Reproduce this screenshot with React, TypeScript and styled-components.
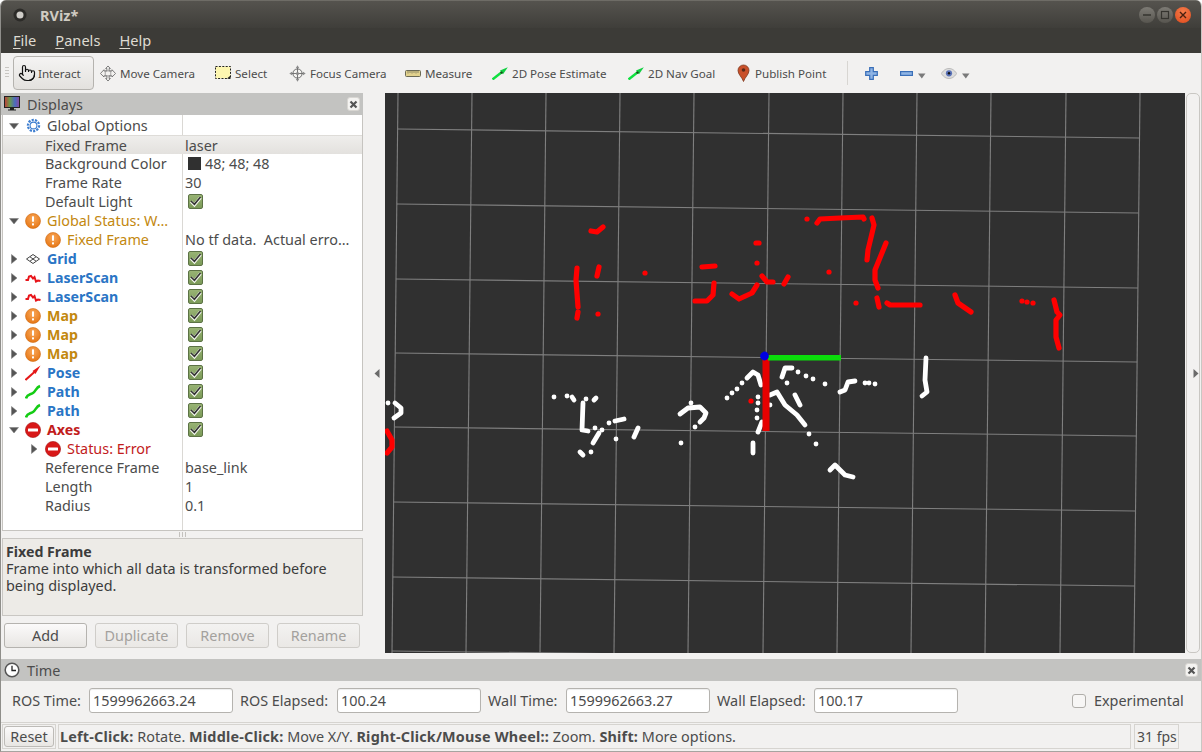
import React, { useId } from 'react';
import styled, { createGlobalStyle } from 'styled-components';
import { Pointer } from 'lucide-react';

const Global = createGlobalStyle`
  html, body { margin: 0; padding: 0; background: #fff; }
  body { font-family: "Noto Sans", "Open Sans", sans-serif; font-size: 14.4px; color: #4c4c4c; }
`;

const Win = styled.div`
  width: 1202px; height: 752px; box-sizing: border-box; display: flex; flex-direction: column;
  background: #f2f1f0; border-radius: 6px 6px 0 0; overflow: hidden;
  border-left: 1px solid #8f8e8a; border-right: 1px solid #c9c7c3; border-bottom: 1px solid #a6a4a0;
`;
const TitleBar = styled.div`
  height: 28px; flex: none; display: flex; align-items: center; position: relative;
  background: linear-gradient(#55534e, #3f3e3a); border-top: 1px solid #6e6c66; box-sizing: border-box;
  padding-left: 12px;
`;
const TitleText = styled.span`
  font-weight: 700; font-size: 14.5px; color: #cfcbc2; margin-left: 13px;
`;
const WinButtons = styled.div`
  margin-left: auto; margin-right: 10px; display: flex; gap: 2px; align-items: center;
`;
const WinBtn = styled.div<{ $close?: boolean }>`
  width: 16px; height: 16px; border-radius: 50%; display: flex; align-items: center; justify-content: center;
  background: ${p => p.$close ? 'radial-gradient(circle at 50% 30%, #f57c4b, #de4a1c)' : 'linear-gradient(#7d7b75, #57554f)'};
`;
const MenuBar = styled.div`
  height: 25px; flex: none; box-sizing: border-box; background: #3c3b37; display: flex; align-items: center; padding: 0 0 1px 12px; gap: 19px;
`;
const MenuItem = styled.span`
  color: #dfdbd2; font-size: 14.6px;
  u { text-underline-offset: 2px; }
`;
const Toolbar = styled.div`
  height: 40px; flex: none; display: flex; align-items: center; background: #f2f1f0; padding-left: 4px; box-sizing: border-box;
`;
const Grip = styled.div`
  width: 4px; height: 12px; margin-right: 4px;
  background: repeating-linear-gradient(#c8c6c2 0 1px, transparent 1px 3px);
`;
const Tool = styled.div<{ $w: number; $active?: boolean }>`
  width: ${p => p.$w}px; height: 34px; flex: none; display: flex; align-items: center; gap: ${p => p.$active ? 2 : 4}px; box-sizing: border-box;
  font-size: 11.6px; color: #4c4c4c; white-space: nowrap;
  ${p => p.$active ? `
    border: 1px solid #b5b3af; border-radius: 4px; background: linear-gradient(#f5f4f3, #e3e1de);
    padding-left: 4px; margin-right: 6px;
  ` : ''}
`;
const ToolSep = styled.div`
  width: 1px; height: 24px; background: #d8d6d2; margin-right: 17px;
`;
const IconTool = styled.div<{ $w: number }>`
  width: ${p => p.$w}px; flex: none; display: flex; align-items: center; gap: 5px;
`;
const CaretBox = styled.div`
  margin-top: 6px; display: flex;
`;
const Content = styled.div`
  height: 566px; flex: none; display: flex;
`;
const LeftDock = styled.div`
  width: 362px; flex: none; display: flex; flex-direction: column; box-sizing: border-box;
`;
const DockHeader = styled.div`
  height: 22px; flex: none; background: #c3c3c1; display: flex; align-items: center; padding: 0 3px 0 3px; gap: 7px;
  color: #4c4c4c; font-size: 14.4px;
`;
const CloseChip = styled.div`
  margin-left: auto; width: 13px; height: 14px; border-radius: 3px; background: #f4f3f1; border: 1px solid #d8d6d2;
  display: flex; align-items: center; justify-content: center; box-sizing: border-box;
`;
const Tree = styled.div`
  height: 416px; flex: none; background: #fff; margin-left: 1px; border: 1px solid #c6c4c0; border-top: none;
  box-sizing: border-box; position: relative; padding-top: 1px;
`;
const ColumnRule = styled.div`
  position: absolute; left: 179px; top: 0; bottom: 0; width: 1px; background: #dad8d4;
`;
const Row = styled.div<{ $sel?: boolean }>`
  height: 19px; display: flex; align-items: center; position: relative; font-size: 14.4px; white-space: pre;
  ${p => p.$sel ? `background: linear-gradient(#efeeec, #e3e1de); border-top: 1px solid #dedcd8; box-sizing: border-box;` : ''}
`;
const NameCell = styled.div<{ $depth: number }>`
  width: 180px; flex: none; box-sizing: border-box; padding-left: ${p => 2 + p.$depth * 20}px; display: flex; align-items: center;
`;
const ArrowSlot = styled.div`
  width: 20px; flex: none; display: flex; justify-content: center; padding-right: 2px; box-sizing: border-box;
`;
const RowIcon = styled.div`
  width: 16px; height: 16px; flex: none; margin-right: 6px; display: flex; align-items: center; justify-content: center;
`;
const Label = styled.span<{ $tone?: string; $bold?: boolean }>`
  color: ${p => p.$tone === 'blue' ? '#2a75c5' : p.$tone === 'orange' ? '#c3880f' : p.$tone === 'red' ? '#c21c1c' : '#4c4c4c'};
  font-weight: ${p => p.$bold ? 700 : 400};
  font-size: ${p => p.$bold ? '14.2px' : 'inherit'};
`;
const ValueCell = styled.div`
  padding-left: 2px; display: flex; align-items: center; gap: 4px; color: #4c4c4c;
`;
const Swatch = styled.div`
  width: 13px; height: 13px; background: #303030; margin-left: 3px;
`;
const Check = styled.div`
  width: 15px; height: 15px; margin-left: 3px; border-radius: 2px; box-sizing: border-box; display: flex; align-items: center; justify-content: center;
  background: linear-gradient(#98b374, #7b9a58); border: 1px solid #5c7245;
`;
const SplitGrip = styled.div`
  height: 7px; flex: none; display: flex; justify-content: center; align-items: center;
  &::after { content: ''; width: 7px; height: 5px; background: repeating-linear-gradient(90deg, #c4c2be 0 1px, transparent 1px 3px); }
`;
const Description = styled.div`
  height: 78px; flex: none; margin-left: 1px; background: #edebe7; border: 1px solid #c9c7c3; box-sizing: border-box;
  padding: 4px 3px; font-size: 14.4px; line-height: 17px; color: #3c3c3c;
  b { display: block; font-weight: 700; font-size: 14.2px; }
`;
const ButtonRow = styled.div`
  display: flex; gap: 8px; padding: 7px 0 0 3px;
`;
const Btn = styled.div<{ $off?: boolean }>`
  width: 83px; height: 25px; box-sizing: border-box; border-radius: 3px; display: flex; align-items: center; justify-content: center;
  font-size: 14.4px; color: ${p => p.$off ? '#a3a19d' : '#4c4c4c'};
  border: 1px solid ${p => p.$off ? '#cfcdc9' : '#b5b3af'};
  background: linear-gradient(${p => p.$off ? '#f3f2f1, #eae8e5' : '#fbfafa, #e8e6e3'});
`;
const Handle = styled.div<{ $w: number }>`
  width: ${p => p.$w}px; flex: none; height: 560px; display: flex; align-items: center; justify-content: center; box-sizing: border-box;
  padding-left: 6px;
`;
const RightHandle = styled(Handle)`
  margin-left: 1px; border: 1px solid #c9c7c3; border-radius: 5px; width: 14px; padding-left: 5px;
`;
const Viewport = styled.svg`
  width: 800px; height: 560px; flex: none; display: block; background: #303030;
`;
const TimeDock = styled.div`
  height: 63px; flex: none; display: flex; flex-direction: column;
`;
const TimeRow = styled.div`
  flex: 1; display: grid; align-items: center; padding: 0 0 2px 11px; box-sizing: border-box;
  grid-template-columns: 77px 144px 7px 90px 7px 144px 7px 71px 7px 144px 7px 90px 7px 144px 114px 22px 1fr;
  font-size: 14.4px; color: #4c4c4c; white-space: nowrap; height: 41px;
`;
const TimeInput = styled.div`
  height: 25px; box-sizing: border-box; border: 1px solid #b5b3af; border-radius: 3px; background: #fff; padding-left: 3px;
  display: flex; align-items: center; box-shadow: inset 0 1px 1px #eee;
`;
const Checkbox = styled.div`
  width: 14px; height: 14px; box-sizing: border-box; border: 1px solid #b0aeaa; border-radius: 3px; background: #f7f6f5;
`;
const StatusBar = styled.div`
  height: 28px; flex: none; display: flex; align-items: center; border-top: 1px solid #d6d4d0; box-sizing: border-box; padding-left: 1px; font-size: 14.4px;
`;
const ResetFrame = styled.div`
  width: 54px; height: 25px; flex: none; box-sizing: border-box; border: 1px solid #d6d4d0; padding: 1px; display: flex;
`;
const ResetBtn = styled.div`
  flex: 1; border: 1px solid #bdbbb7; border-radius: 3px; display: flex; align-items: center; justify-content: center;
  background: linear-gradient(#fbfafa, #e8e6e3); font-size: 14.4px;
`;
const Message = styled.div`
  width: 1073px; height: 25px; margin-left: 2px; flex: none; border: 1px solid #d6d4d0; box-sizing: border-box; padding-left: 1px; display: flex; align-items: center; white-space: pre;
  b { font-weight: 700; letter-spacing: .2px; }
`;
const Fps = styled.div`
  width: 45px; height: 25px; margin-left: 3px; flex: none; border: 1px solid #d6d4d0; box-sizing: border-box; padding-left: 2px; display: flex; align-items: center; font-size: 14px;
`;

/* ---------- icons ---------- */
const Tri = ({ dir }: { dir: 'down' | 'right' }) => (
  <svg width="10" height="10" viewBox="0 0 10 10">
    <path d={dir === 'down' ? 'M0.5 2.5h9L5 8z' : 'M2.5 0.5v9L8 5z'} fill="#555" stroke="#777" strokeWidth=".5" />
  </svg>
);
const Warn = () => {
  const id = useId();
  return (
    <svg width="16" height="16" viewBox="0 0 16 16">
      <defs><radialGradient id={id} cx=".5" cy=".35" r=".7"><stop offset="0" stopColor="#f9a85a" /><stop offset="1" stopColor="#e4720f" /></radialGradient></defs>
      <circle cx="8" cy="8" r="7.5" fill={`url(#${id})`} stroke="#d06a10" strokeWidth=".6" />
      <rect x="7" y="3.2" width="2" height="5.6" rx=".6" fill="#fff" />
      <rect x="7" y="10.2" width="2" height="2.2" rx=".6" fill="#fff" />
    </svg>
  );
};
const Err = () => (
  <svg width="16" height="16" viewBox="0 0 16 16">
    <circle cx="8" cy="8" r="7.6" fill="#d81818" stroke="#a81010" strokeWidth=".6" />
    <rect x="3" y="6.5" width="10" height="3" rx=".5" fill="#fff" />
  </svg>
);
const Gear = () => (
  <svg width="15" height="15" viewBox="0 0 15 15">
    <circle cx="7.5" cy="7.5" r="5.6" fill="none" stroke="#3f7fd0" strokeWidth="2.2" strokeDasharray="2.2 1.2" />
    <circle cx="7.5" cy="7.5" r="3.4" fill="#fff" stroke="#3f7fd0" strokeWidth="1.1" />
  </svg>
);
const GridIcon = () => (
  <svg width="16" height="12" viewBox="0 0 16 12">
    <path d="M8 1.5L14.5 6L8 10.5L1.5 6zM5 3.8L11 8.2M11 3.8L5 8.2" fill="none" stroke="#444" strokeWidth="1" />
  </svg>
);
const Laser = () => (
  <svg width="16" height="12" viewBox="0 0 16 12">
    <path d="M0.5 8L3 8L4 4.5L6 4L8 6.5L9.5 5L11 9.5L13 8.5L15.5 9" fill="none" stroke="#e8141a" strokeWidth="2" />
  </svg>
);
const PoseI = () => (
  <svg width="16" height="16" viewBox="0 0 16 16">
    <path d="M0.5 15L10 6.5" stroke="#e41818" strokeWidth="2" />
    <path d="M15.5 0.5L7.5 6L10.5 9z" fill="#e41818" />
  </svg>
);
const PathI = () => (
  <svg width="16" height="16" viewBox="0 0 16 16">
    <path d="M1 14.5C2 10 5 11 8 9C11 7 11 3.5 15 2" fill="none" stroke="#14cc14" strokeWidth="2.6" />
  </svg>
);
const Monitor = () => {
  const id = useId();
  return (
    <svg width="16" height="16" viewBox="0 0 16 16">
      <defs><linearGradient id={id} x1="0" x2="1"><stop offset="0" stopColor="#c43a3a" /><stop offset=".35" stopColor="#6a9a4a" /><stop offset=".7" stopColor="#4a6ac0" /><stop offset="1" stopColor="#8a4a9a" /></linearGradient></defs>
      <rect x=".5" y=".5" width="15" height="11" fill={`url(#${id})`} stroke="#222" />
      <path d="M6 12h4v1.5h2v1H4v-1h2z" fill="#222" />
    </svg>
  );
};
const Clock = () => (
  <svg width="16" height="16" viewBox="0 0 16 16">
    <circle cx="8" cy="8" r="6.8" fill="#fff" stroke="#555" strokeWidth="1.5" />
    <path d="M8 3.8V8.5H12" fill="none" stroke="#222" strokeWidth="1.3" />
  </svg>
);
const XMark = () => (
  <svg width="9" height="9" viewBox="0 0 9 9"><path d="M1.5 1.5L7.5 7.5M7.5 1.5L1.5 7.5" stroke="#555" strokeWidth="2.2" /></svg>
);
const Tick = () => (
  <svg width="13" height="13" viewBox="0 0 13 13">
    <path d="M2 6.5L5.4 10L11.5 2.5" fill="none" stroke="#f3f6ee" strokeWidth="3" />
    <path d="M2 6L5.4 9.3L11.5 2" fill="none" stroke="#333" strokeWidth="1.6" />
  </svg>
);
const MoveCam = () => (
  <svg width="16" height="17" viewBox="0 0 17 17" style={{ flex: 'none' }}>
    <path d="M8.5 .5L11 3.2H9.7V5.8H12.8V4.5L16.5 8.5L12.8 12.2V11H9.7V13.8H11L8.5 16.5L6 13.8H7.3V11H4.2V12.2L.5 8.5L4.2 4.5V5.8H7.3V3.2H6z" fill="#f3f2f0" stroke="#6a6a6a" strokeWidth=".9" />
    <rect x="5.5" y="5.8" width="6" height="5.2" fill="none" stroke="#8a8a8a" strokeWidth=".8" />
  </svg>
);
const SelectI = () => (
  <svg width="16" height="14" viewBox="0 0 16 14" style={{ flex: 'none' }}>
    <rect x=".5" y=".5" width="15" height="12" fill="#fdf6b0" stroke="#222" strokeDasharray="2 1.4" />
    <path d="M12 12.5H15.5V9.5z" fill="#222" />
  </svg>
);
const FocusI = () => (
  <svg width="17" height="17" viewBox="0 0 17 17" style={{ flex: 'none' }}>
    <circle cx="8.5" cy="8.5" r="4.6" fill="#f3f2f0" stroke="#6a6a6a" />
    <path d="M8.5 1V16M1 8.5H16" stroke="#6a6a6a" strokeWidth=".9" />
    <path d="M8.5 .3L6.8 3H10.2zM8.5 16.7L6.8 14H10.2zM.3 8.5L3 6.8V10.2zM16.7 8.5L14 6.8V10.2z" fill="#8a8a8a" />
    <circle cx="8.5" cy="8.5" r="1.6" fill="#888" />
  </svg>
);
const Ruler = () => (
  <svg width="16" height="7" viewBox="0 0 16 7" style={{ flex: 'none' }}>
    <rect x=".5" y=".5" width="15" height="6" rx="1" fill="#e2d28e" stroke="#6b6a55" />
    <path d="M3 1V3.5M5 1V3M7 1V3.5M9 1V3M11 1V3.5M13 1V3" stroke="#6b6a55" strokeWidth=".7" />
  </svg>
);
const Arrow2D = () => (
  <svg width="16" height="13" viewBox="0 0 16 13" style={{ flex: 'none' }}>
    <path d="M0.5 12.5L10 5" stroke="#10e040" strokeWidth="2.4" />
    <path d="M15.8 0.3L8 3.6L11 7.2z" fill="#10d040" />
    <circle cx="9.5" cy="5.6" r="1.2" fill="#1a4a1a" />
  </svg>
);
const Pin = () => (
  <svg width="15" height="18" viewBox="0 0 14 18" style={{ flex: 'none' }}>
    <path d="M7 17.5C5.5 13 1.5 10.5 1.5 6.5a5.5 5.5 0 0 1 11 0C12.5 10.5 8.5 13 7 17.5z" fill="#c9502a" stroke="#7d3a20" strokeWidth=".8" />
    <circle cx="7" cy="6" r="1.8" fill="#5a2a18" />
  </svg>
);
const PlusI = () => (
  <svg width="13" height="13" viewBox="0 0 13 13">
    <path d="M4.7 .7H8.3V4.7H12.3V8.3H8.3V12.3H4.7V8.3H.7V4.7H4.7z" fill="#8fb4e4" stroke="#3a6fb8" strokeWidth="1.2" />
  </svg>
);
const MinusI = () => (
  <svg width="13" height="5" viewBox="0 0 13 5">
    <rect x=".6" y=".6" width="11.8" height="3.8" fill="#8fb4e4" stroke="#3a6fb8" strokeWidth="1.2" />
  </svg>
);
const EyeI = () => (
  <svg width="16" height="11" viewBox="0 0 16 11">
    <path d="M.3 5.5C3 1.5 5.5 .5 8 .5s5 1 7.7 5C13 9.5 10.5 10.5 8 10.5S3 9.5.3 5.5z" fill="#dcdcdc" stroke="#a8a8a8" strokeWidth=".7" />
    <circle cx="8" cy="5.3" r="3.1" fill="#5a72b8" />
    <circle cx="8" cy="5.3" r="1.2" fill="#111" />
  </svg>
);
const Caret = () => (
  <CaretBox><svg width="8" height="6" viewBox="0 0 8 6"><path d="M0 .5H7.5L3.8 5.5z" fill="#7a7a7a" /></svg></CaretBox>
);
const HandleArrow = ({ dir }: { dir: 'l' | 'r' }) => (
  <svg width="6" height="9" viewBox="0 0 6 9"><path d={dir === 'l' ? 'M5.5 0V9L.5 4.5z' : 'M.5 0V9L5.5 4.5z'} fill="#6a6a6a" /></svg>
);

/* ---------- tree data ---------- */
type RowT = {
  depth: number; arrow?: 'down' | 'right'; icon?: React.ReactNode; label: string;
  tone?: string; bold?: boolean; value?: string; check?: boolean; swatch?: boolean; sel?: boolean;
};
const rows: RowT[] = [
  { depth: 0, arrow: 'down', icon: <Gear />, label: 'Global Options' },
  { depth: 1, label: 'Fixed Frame', value: 'laser', sel: true },
  { depth: 1, label: 'Background Color', value: '48; 48; 48', swatch: true },
  { depth: 1, label: 'Frame Rate', value: '30' },
  { depth: 1, label: 'Default Light', check: true },
  { depth: 0, arrow: 'down', icon: <Warn />, label: 'Global Status: W…', tone: 'orange' },
  { depth: 1, icon: <Warn />, label: 'Fixed Frame', tone: 'orange', value: 'No tf data.  Actual erro…' },
  { depth: 0, arrow: 'right', icon: <GridIcon />, label: 'Grid', tone: 'blue', bold: true, check: true },
  { depth: 0, arrow: 'right', icon: <Laser />, label: 'LaserScan', tone: 'blue', bold: true, check: true },
  { depth: 0, arrow: 'right', icon: <Laser />, label: 'LaserScan', tone: 'blue', bold: true, check: true },
  { depth: 0, arrow: 'right', icon: <Warn />, label: 'Map', tone: 'orange', bold: true, check: true },
  { depth: 0, arrow: 'right', icon: <Warn />, label: 'Map', tone: 'orange', bold: true, check: true },
  { depth: 0, arrow: 'right', icon: <Warn />, label: 'Map', tone: 'orange', bold: true, check: true },
  { depth: 0, arrow: 'right', icon: <PoseI />, label: 'Pose', tone: 'blue', bold: true, check: true },
  { depth: 0, arrow: 'right', icon: <PathI />, label: 'Path', tone: 'blue', bold: true, check: true },
  { depth: 0, arrow: 'right', icon: <PathI />, label: 'Path', tone: 'blue', bold: true, check: true },
  { depth: 0, arrow: 'down', icon: <Err />, label: 'Axes', tone: 'red', bold: true, check: true },
  { depth: 1, arrow: 'right', icon: <Err />, label: 'Status: Error', tone: 'red' },
  { depth: 1, label: 'Reference Frame', value: 'base_link' },
  { depth: 1, label: 'Length', value: '1' },
  { depth: 1, label: 'Radius', value: '0.1' },
];

/* ---------- viewport drawing data (absolute screenshot coordinates) ---------- */
const vTop = [398, 472, 546, 620, 694, 769, 843, 917, 991, 1066, 1140];
const hLeft = [129, 204, 279, 353, 427, 502, 577, 651];
const redScan: number[][][] = [
  [[591,231],[597,232],[603,227]], [[577,268],[576,280],[578,307]], [[578,312],[577,318]], [[599,267],[597,276]],
  [[598,314]], [[645,273]], [[702,267],[715,266]], [[714,283],[713,295],[707,301],[695,301]],
  [[732,294],[739,299],[752,293],[757,285]], [[756,243],[759,243]], [[757,263]], [[762,276],[767,282],[773,282]],
  [[788,277],[784,284]], [[829,272]], [[807,219]], [[817,223],[820,219],[840,218],[863,217],[864,219]],
  [[872,218],[874,225],[868,250],[867,260]], [[886,243],[875,270],[875,280],[878,288]], [[877,298],[879,307]],
  [[856,303]], [[887,303],[890,305],[920,305]], [[955,295],[958,303],[971,312]], [[1022,301]], [[1027,302]], [[1033,303]],
  [[1054,300],[1057,312],[1060,315],[1056,320],[1056,337],[1059,348]], [[387,431],[392,440],[392,447],[387,453]],
  [[751,401]],
];
const whiteScan: number[][][] = [
  [[926,358],[925,380],[927,392],[922,396]], [[554,397]], [[567,396]], [[572,397],[574,400]], [[583,403],[582,430],[588,431]],
  [[586,399]], [[594,400],[596,398]], [[595,428]], [[602,430]], [[599,433],[593,443]], [[580,452],[583,455]], [[591,452]],
  [[609,423]], [[615,421],[624,419]], [[616,439]], [[638,428],[634,437]],
  [[680,414],[688,408],[700,407],[706,413],[704,418],[700,422]], [[691,403]], [[695,427]], [[681,443]],
  [[727,398]], [[732,393]], [[737,389]], [[742,383]], [[747,378],[753,372],[758,375],[761,385]],
  [[758,397]], [[758,403]], [[757,410]], [[757,418]], [[762,422],[758,432]], [[753,443],[753,453]],
  [[770,395],[777,392],[785,405],[797,415],[805,425]], [[770,405]], [[795,395],[800,405]],
  [[782,377],[785,368],[792,368]], [[787,383]], [[798,372]], [[806,376]], [[813,379]], [[825,384]], [[809,434]], [[816,444]],
  [[830,470],[835,465],[845,475],[853,477]], [[840,392],[845,390],[848,382],[855,381]], [[865,383]], [[869,383]], [[875,384]],
  [[388,403]], [[395,403],[401,408],[401,413],[394,418]],
];
const toD = (pts: number[][]) =>
  pts.length === 1 ? `M${pts[0][0]} ${pts[0][1]}h.01` : 'M' + pts.map(p => p.join(' ')).join('L');

const Scene = () => (
  <Viewport viewBox="385 93 800 560">
    <g stroke="#7f7f7f" strokeWidth="1.1">
      {vTop.map(x => <line key={x} x1={x} y1={93} x2={x - 6} y2={653} />)}
      {hLeft.map(y => {
        const xl = 398 - ((y - 93) * 6) / 560;
        const xr = 1140 - ((y - 93) * 6) / 560;
        return <line key={y} x1={xl} y1={y} x2={xr} y2={y + 9} />;
      })}
    </g>
    <g fill="none" stroke="#ff0000" strokeWidth="5.2" strokeLinejoin="round" strokeLinecap="round">
      {redScan.map((p, i) => <path key={i} d={toD(p)} />)}
    </g>
    <g fill="none" stroke="#ffffff" strokeWidth="4.8" strokeLinejoin="round" strokeLinecap="round">
      {whiteScan.map((p, i) => <path key={i} d={toD(p)} />)}
    </g>
    <rect x="762.5" y="358" width="7" height="73" fill="#e60000" />
    <rect x="768" y="355" width="73" height="5.5" fill="#0bdc0b" />
    <circle cx="764.5" cy="356" r="4.4" fill="#0000e0" />
  </Viewport>
);

export default function App() {
  return (
    <>
      <Global />
      <Win>
        <TitleBar>
          <svg width="14" height="14" viewBox="0 0 14 14">
            <circle cx="7" cy="7" r="6.5" fill="#2c2b28" />
            <circle cx="7" cy="7" r="3.5" fill="#cfcdc8" />
          </svg>
          <TitleText>RViz*</TitleText>
          <WinButtons>
            <WinBtn><svg width="10" height="10" viewBox="0 0 10 10"><path d="M1 5H9" stroke="#35342f" strokeWidth="1.4" /></svg></WinBtn>
            <WinBtn><svg width="10" height="10" viewBox="0 0 10 10"><rect x="1.5" y="1.5" width="7" height="7" fill="none" stroke="#35342f" strokeWidth="1.2" /></svg></WinBtn>
            <WinBtn $close><svg width="10" height="10" viewBox="0 0 10 10"><path d="M2 2L8 8M8 2L2 8" stroke="#4a2010" strokeWidth="1.4" /></svg></WinBtn>
          </WinButtons>
        </TitleBar>
        <MenuBar>
          <MenuItem><u>F</u>ile</MenuItem>
          <MenuItem><u>P</u>anels</MenuItem>
          <MenuItem><u>H</u>elp</MenuItem>
        </MenuBar>
        <Toolbar>
          <Grip />
          <Tool $w={81} $active><Pointer size={18} color="#111" strokeWidth={1.6} />Interact</Tool>
          <Tool $w={115}><MoveCam />Move Camera</Tool>
          <Tool $w={74}><SelectI />Select</Tool>
          <Tool $w={116}><FocusI />Focus Camera</Tool>
          <Tool $w={87}><Ruler />Measure</Tool>
          <Tool $w={136}><Arrow2D />2D Pose Estimate</Tool>
          <Tool $w={108}><Arrow2D />2D Nav Goal</Tool>
          <Tool $w={111}><Pin />Publish Point</Tool>
          <ToolSep />
          <IconTool $w={35}><PlusI /></IconTool>
          <IconTool $w={41}><MinusI /><Caret /></IconTool>
          <IconTool $w={32}><EyeI /><Caret /></IconTool>
        </Toolbar>
        <Content>
          <LeftDock>
            <DockHeader><Monitor />Displays<CloseChip><XMark /></CloseChip></DockHeader>
            <Tree>
              <ColumnRule />
              {rows.map((r, i) => (
                <Row key={i} $sel={r.sel}>
                  <NameCell $depth={r.depth}>
                    <ArrowSlot>{r.arrow && <Tri dir={r.arrow} />}</ArrowSlot>
                    {r.icon && <RowIcon>{r.icon}</RowIcon>}
                    <Label $tone={r.tone} $bold={r.bold}>{r.label}</Label>
                  </NameCell>
                  <ValueCell>
                    {r.swatch && <Swatch />}
                    {r.check && <Check><Tick /></Check>}
                    {r.value}
                  </ValueCell>
                </Row>
              ))}
            </Tree>
            <SplitGrip />
            <Description>
              <b>Fixed Frame</b>
              Frame into which all data is transformed before being displayed.
            </Description>
            <ButtonRow>
              <Btn>Add</Btn>
              <Btn $off>Duplicate</Btn>
              <Btn $off>Remove</Btn>
              <Btn $off>Rename</Btn>
            </ButtonRow>
          </LeftDock>
          <Handle $w={22}><HandleArrow dir="l" /></Handle>
          <Scene />
          <RightHandle $w={14}><HandleArrow dir="r" /></RightHandle>
        </Content>
        <TimeDock>
          <DockHeader><Clock />Time<CloseChip><XMark /></CloseChip></DockHeader>
          <TimeRow>
            <span>ROS Time:</span><TimeInput>1599962663.24</TimeInput><span />
            <span>ROS Elapsed:</span><span /><TimeInput>100.24</TimeInput><span />
            <span>Wall Time:</span><span /><TimeInput>1599962663.27</TimeInput><span />
            <span>Wall Elapsed:</span><span /><TimeInput>100.17</TimeInput>
            <span />
            <Checkbox /><span>Experimental</span>
          </TimeRow>
        </TimeDock>
        <StatusBar>
          <ResetFrame><ResetBtn>Reset</ResetBtn></ResetFrame>
          <Message><b>Left-Click:</b> Rotate. <b>Middle-Click:</b> Move X/Y. <b>Right-Click/Mouse Wheel::</b> Zoom. <b>Shift:</b> More options.</Message>
          <Fps>31 fps</Fps>
        </StatusBar>
      </Win>
    </>
  );
}
